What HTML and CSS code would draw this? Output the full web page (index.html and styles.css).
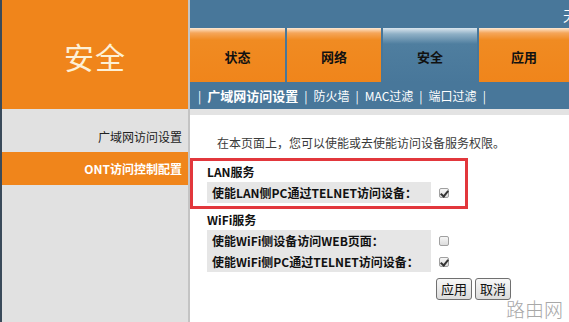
FILE: index.html
```html
<!DOCTYPE html>
<html lang="zh-CN">
<head>
<meta charset="utf-8">
<title>安全</title>
<link rel="stylesheet" href="styles.css">
</head>
<body>
<div class="frame">
  <aside class="side">
    <div class="logo">安全</div>
    <div class="menu">
      <div class="menu-item">广域网访问设置</div>
      <div class="menu-item active">ONT访问控制配置</div>
    </div>
  </aside>
  <main class="main">
    <div class="topbar"><span class="brand">天翼网关</span></div>
    <nav class="tabs">
      <div class="tab">状态</div>
      <div class="tab">网络</div>
      <div class="tab active">安全</div>
      <div class="tab last">应用</div>
    </nav>
    <div class="subnav">
      <span class="sep">|</span><span class="sub current">广域网访问设置</span><span class="sep">|</span><span class="sub">防火墙</span><span class="sep">|</span><span class="sub">MAC过滤</span><span class="sep">|</span><span class="sub">端口过滤</span><span class="sep">|</span>
    </div>
    <section class="content">
      <p class="intro">在本页面上，您可以使能或去使能访问设备服务权限。</p>
      <div class="group highlight">
        <div class="group-title">LAN服务</div>
        <div class="row"><span class="label">使能LAN侧PC通过TELNET访问设备：</span><input class="check" type="checkbox" checked></div>
      </div>
      <div class="group">
        <div class="group-title">WiFi服务</div>
        <div class="row"><span class="label">使能WiFi侧设备访问WEB页面：</span><input class="check" type="checkbox"></div>
        <div class="row"><span class="label">使能WiFi侧PC通过TELNET访问设备：</span><input class="check" type="checkbox" checked></div>
      </div>
      <div class="actions">
        <button class="btn">应用</button><button class="btn">取消</button>
      </div>
    </section>
  </main>
  <div class="watermark">路由网</div>
</div>
</body>
</html>
```

FILE: styles.css
```css
* { box-sizing: border-box; }
html, body { margin: 0; padding: 0; }
body {
  width: 569px;
  height: 322px;
  overflow: hidden;
  font-family: "Noto Sans CJK SC", "Liberation Sans", sans-serif;
  font-size: 12px;
  color: #222;
  background: #fff;
}
.frame {
  position: relative;
  display: flex;
  height: 322px;
  border-left: 2px solid #3a4a5a;
}
.side {
  width: 188px;
  flex: none;
  background: #e1e1e1;
  border-right: 2px solid #c4c4c4;
  display: flex;
  flex-direction: column;
}
.logo {
  height: 109px;
  background: #f0851b;
  color: #fdf0d6;
  font-size: 30px;
  display: flex;
  align-items: center;
  justify-content: center;
  padding-top: 2px;
  letter-spacing: 1px;
}
.menu {
  padding-top: 13px;
  display: flex;
  flex-direction: column;
}
.menu-item {
  height: 30px;
  line-height: 30px;
  text-align: right;
  padding-right: 6px;
  color: #222;
  font-size: 12px;
}
.menu-item.active {
  height: 33px;
  line-height: 33px;
  background: #f0851b;
  color: #fff;
  font-weight: bold;
}
.main {
  flex: 1;
  display: flex;
  flex-direction: column;
  min-width: 0;
}
.topbar {
  height: 28px;
  background: #48779a;
  padding-left: 373px;
  white-space: nowrap;
  overflow: hidden;
  line-height: 30px;
}
.brand {
  color: #fff;
  font-size: 14px;
}
.tabs {
  height: 54px;
  background: #48779a;
  display: flex;
  gap: 2px;
}
.tab {
  width: 95px;
  background: linear-gradient(to bottom, #fde9d4 0, #f5a65a 5px, #f08b22 12px, #f0851b 100%);
  color: #111;
  font-weight: bold;
  font-size: 13px;
  display: flex;
  align-items: center;
  justify-content: center;
  padding-top: 3px;
}
.tab:nth-child(2), .tab:nth-child(3) { width: 94px; }
.tab.last { flex: 1; }
.tab.active {
  background: linear-gradient(to bottom, #dbe6ee 0, #8fb0c6 6px, #4f7e9f 16px, #48779a 100%);
  color: #111;
}
.subnav {
  height: 27px;
  background: #48779a;
  color: #fff;
  display: flex;
  align-items: center;
  padding-left: 8px;
  font-size: 12px;
  white-space: nowrap;
}
.sep { margin: 0 6px 0 0; }
.sub { margin-right: 6px; }
.sub.current { font-weight: bold; font-size: 13px; }
.content {
  flex: 1;
  border-top: 6px solid #e3e3e3;
  padding-top: 20px;
  position: relative;
}
.intro {
  margin: 0 0 7px 27px;
  line-height: 16px;
  color: #3a3a3a;
  font-size: 12px;
}
.group {
  padding-left: 17px;
  margin-top: 3px;
}
.group.highlight {
  width: 278px;
  margin-top: 0;
  padding: 3px 0 3px 14px;
  border: 3px solid #e2373c;
}
.group-title {
  font-weight: bold;
  line-height: 16px;
  margin-bottom: 2px;
  color: #111;
}
.row {
  display: flex;
  align-items: center;
  height: 21px;
}
.label {
  width: 224px;
  height: 21px;
  line-height: 21px;
  background: #e6e6e6;
  padding-left: 5px;
  font-weight: bold;
  color: #111;
  white-space: nowrap;
}
.check {
  appearance: none;
  -webkit-appearance: none;
  position: relative;
  width: 10px;
  height: 10px;
  margin: 0 0 0 8px;
  border: 1px solid #a0a0a0;
  border-radius: 2px;
  background: linear-gradient(to bottom, #f6f6f6, #dcdcdc);
}
.check:checked::after {
  content: "";
  position: absolute;
  left: 2px;
  top: 0;
  width: 3px;
  height: 6px;
  border-right: 2px solid #333;
  border-bottom: 2px solid #333;
  transform: rotate(40deg);
}
.actions {
  display: flex;
  gap: 3px;
  padding-left: 246px;
  margin-top: 6px;
}
.btn {
  height: 22px;
  padding: 0 4px;
  font-family: "Noto Sans CJK SC", "Liberation Sans", sans-serif;
  font-size: 13px;
  color: #111;
  background: linear-gradient(to bottom, #f7f7f7, #dcdcdc);
  border: 1px solid #707070;
  border-radius: 3px;
  line-height: 18px;
}
.watermark {
  position: absolute;
  right: 6px;
  bottom: 2px;
  font-size: 19px;
  color: #a8a8a8;
  font-weight: 300;
  line-height: 22px;
}
```
